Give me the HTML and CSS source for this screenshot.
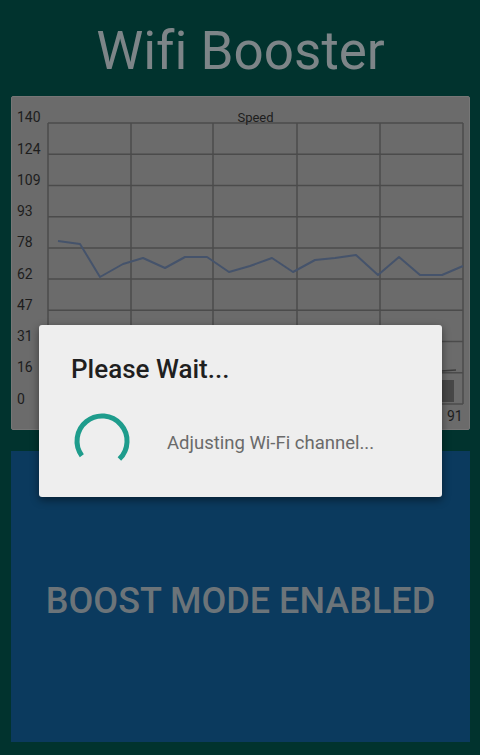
FILE: index.html
```html
<!DOCTYPE html>
<html>
<head>
<meta charset="utf-8">
<link rel="stylesheet" href="styles.css">
</head>
<body>
<div class="app">
  <header class="title-bar"><h1 class="title">Wifi Booster</h1></header>
  <section class="chart-card">
    <svg class="chart" viewBox="0 0 459 334" width="459" height="334">
      <g class="grid">
        <line x1="37" y1="27" x2="452" y2="27"/>
        <line x1="37" y1="58.2" x2="452" y2="58.2"/>
        <line x1="37" y1="89.4" x2="452" y2="89.4"/>
        <line x1="37" y1="120.7" x2="452" y2="120.7"/>
        <line x1="37" y1="151.9" x2="452" y2="151.9"/>
        <line x1="37" y1="183.1" x2="452" y2="183.1"/>
        <line x1="37" y1="214.3" x2="452" y2="214.3"/>
        <line x1="37" y1="245.5" x2="452" y2="245.5"/>
        <line x1="37" y1="276.8" x2="452" y2="276.8"/>
        <line x1="37" y1="308" x2="452" y2="308"/>
        <line x1="37" y1="27" x2="37" y2="308"/>
        <line x1="120" y1="27" x2="120" y2="308"/>
        <line x1="202" y1="27" x2="202" y2="308"/>
        <line x1="286" y1="27" x2="286" y2="308"/>
        <line x1="369" y1="27" x2="369" y2="308"/>
        <line x1="452" y1="27" x2="452" y2="308"/>
      </g>
      <g class="ylabels">
        <text x="6" y="26">140</text>
        <text x="6" y="57.5">124</text>
        <text x="6" y="88.5">109</text>
        <text x="6" y="120">93</text>
        <text x="6" y="151">78</text>
        <text x="6" y="182.5">62</text>
        <text x="6" y="213.5">47</text>
        <text x="6" y="245">31</text>
        <text x="6" y="276">16</text>
        <text x="6" y="308">0</text>
      </g>
      <text class="chart-title" x="244.5" y="26">Speed</text>
      <text class="xlabel" x="436" y="325">91</text>
      <rect class="legend-box" x="430" y="284" width="13" height="22"/>
      <line class="legend-line" x1="430" y1="275" x2="445" y2="274"/>
      <polyline class="series" points="47,145 69,148 89,181 112,168 132,162 154,172 174,161 196,161 218,176 239,170 261,162 282,176 304,164 324,162 345,159 367,179 388,161 409,179 431,179 452,170"/>
    </svg>
  </section>
  <section class="boost-card">
    <p class="boost-text">BOOST MODE ENABLED</p>
  </section>

  <div class="dialog">
    <h2 class="dialog-title">Please Wait...</h2>
    <div class="dialog-body">
      <svg class="spinner" viewBox="0 0 60 60" width="60" height="60">
        <path d="M 9.8 44.7 A 25 25 0 1 1 47.4 48" />
      </svg>
      <span class="dialog-msg">Adjusting Wi-Fi channel...</span>
    </div>
  </div>
</div>
</body>
</html>
```

FILE: styles.css
```css
* { box-sizing: border-box; }
html, body {
  margin: 0;
  padding: 0;
  width: 480px;
  height: 755px;
  overflow: hidden;
  background: #01332e;
  font-family: Roboto, "Noto Sans", sans-serif;
  font-variant-ligatures: none;
}
.app {
  position: relative;
  width: 480px;
  height: 755px;
  display: flex;
  flex-direction: column;
  padding: 0 10px 13px 11px;
}
.title-bar {
  height: 96px;
  display: flex;
  align-items: flex-start;
  justify-content: center;
}
.title {
  margin: 18px 0 0 0;
  font-weight: 400;
  font-size: 53px;
  line-height: 66px;
  color: #7d8588;
  letter-spacing: 0;
}
.chart-card {
  height: 334px;
  background: #6b6b6b;
  border: 1px solid #767676;
  border-radius: 2px;
  overflow: hidden;
}
.chart { display: block; margin: -1px; }
.grid line {
  stroke: #4b4b4b;
  stroke-width: 1.5;
}
.ylabels text, .xlabel {
  font-family: Roboto, sans-serif;
  font-size: 14px;
  fill: #1d1d1d;
}
.chart-title {
  font-family: Roboto, sans-serif;
  font-size: 13px;
  fill: #1d1d1d;
  text-anchor: middle;
}
.legend-box { fill: #474747; }
.legend-line { stroke: #3d3d3d; stroke-width: 1.5; }
.series {
  fill: none;
  stroke: #45536b;
  stroke-width: 2;
  stroke-linejoin: round;
}
.boost-card {
  margin-top: 21px;
  flex: 1;
  background: #0b3a5e;
  display: flex;
  align-items: center;
  justify-content: center;
}
.boost-text {
  margin: 0;
  padding-top: 9px;
  font-size: 36px;
  font-weight: 500;
  color: #6c7479;
  letter-spacing: 0;
}
.dialog {
  position: absolute;
  left: 39px;
  top: 325px;
  width: 403px;
  height: 172px;
  background: #eeeeee;
  border-radius: 3px;
  box-shadow: 0 3px 8px rgba(0,0,0,0.45);
  padding: 28px 32px 0 32px;
}
.dialog-title {
  margin: 0;
  font-size: 26px;
  font-weight: 500;
  line-height: 32px;
  color: #1f1f1f;
}
.dialog-body {
  display: flex;
  align-items: center;
  margin-top: 28px;
}
.spinner {
  display: block;
  margin-left: 1px;
  margin-top: -2px;
  flex: none;
}
.spinner path {
  fill: none;
  stroke: #1e9c8c;
  stroke-width: 5;
}
.dialog-msg {
  margin-left: 35px;
  margin-top: 2px;
  font-size: 18.5px;
  color: #6a6a6a;
}
```
